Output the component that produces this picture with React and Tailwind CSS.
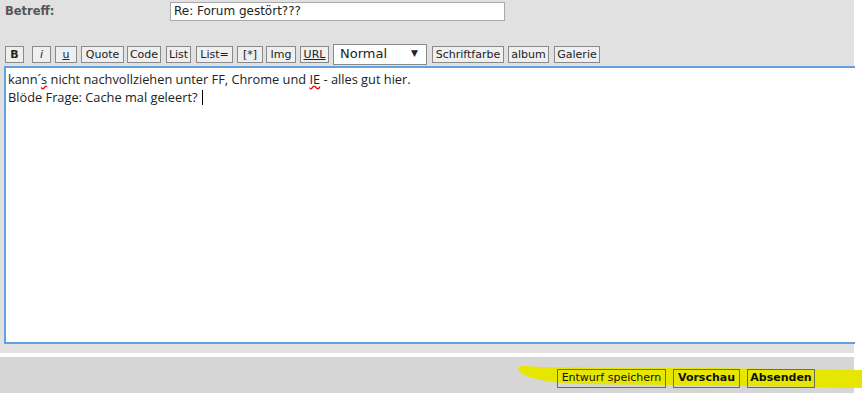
import React from "react";

const btn =
  "shrink-0 whitespace-nowrap h-[17px] border border-[#8a8a8a] bg-[#efefef] text-[11px] leading-[15px] text-[#222] flex items-center justify-center";

export default function App() {
  const tools = [
    { t: "B", w: "w-[19px]", c: "font-bold" },
    { t: "i", w: "w-[19px]", c: "italic ml-[8px]" },
    { t: "u", w: "w-[22px]", c: "underline ml-[4px]" },
    { t: "Quote", w: "w-[43px]", c: "ml-[4px]" },
    { t: "Code", w: "w-[34px]", c: "ml-[3px]" },
    { t: "List", w: "w-[25px]", c: "ml-[5px]" },
    { t: "List=", w: "w-[37px]", c: "ml-[5px]" },
    { t: "[*]", w: "w-[26px]", c: "ml-[4px]" },
    { t: "Img", w: "w-[30px]", c: "ml-[3px]" },
    { t: "URL", w: "w-[29px]", c: "ml-[4px] underline" },
  ];
  const bb =
    "shrink-0 whitespace-nowrap h-[19px] border border-[#6a6a6a] flex items-center justify-center";
  return (
    <div
      className="w-[862px] h-[393px] bg-white flex flex-col overflow-hidden relative"
      style={{ fontFamily: '"DejaVu Sans", Verdana, sans-serif' }}
    >
      <div className="w-[854px] h-[353px] bg-[#e1e1e1] flex flex-col">
        <div className="flex h-[43px]">
          <div className="w-[170px] pl-[5px] pt-[3px] text-[11.5px] font-bold text-[#555]">
            Betreff:
          </div>
          <div className="mt-[2px] w-[335px] h-[19px] bg-white border border-[#a9a9a9] text-[12px] leading-[17px] pl-[3px] text-[#222]">
            Re: Forum gestört???
          </div>
        </div>
        <div className="flex items-center h-[22px] pl-[5px]">
          {tools.map((b) => (
            <div key={b.t} className={`${btn} ${b.w} ${b.c}`}>
              {b.t}
            </div>
          ))}
          <div className="shrink-0 ml-[4px] w-[94px] h-[21px] bg-white border border-[#8a8a8a] flex items-center justify-between pl-[6px] pr-[8px] text-[13px] text-[#222]">
            <span>Normal</span>
            <span className="text-[9px]">▼</span>
          </div>
          <div className={`${btn} w-[72px] ml-[5px]`}>Schriftfarbe</div>
          <div className={`${btn} w-[41px] ml-[4px]`}>album</div>
          <div className={`${btn} w-[46px] ml-[5px]`}>Galerie</div>
        </div>
        <div
          className="ml-[4px] mt-[1px] w-[851px] h-[278px] bg-white border-2 border-[#64a0e0] border-r-0 pl-[2px] pt-[2px] text-[12.8px] leading-[18px] text-[#222]"
          style={{ fontFamily: '"Open Sans", sans-serif' }}
        >
          <div className="whitespace-nowrap">
            kann´<span className="underline decoration-wavy decoration-red-600">s</span> nicht nachvollziehen unter FF, Chrome und{" "}
            <span className="underline decoration-wavy decoration-red-600">IE</span> - alles gut hier.
          </div>
          <div className="flex items-center">
            Blöde Frage: Cache mal geleert?
            <span className="inline-block ml-[4px] w-px h-[15px] bg-black" />
          </div>
        </div>
      </div>
      <div className="h-[4px]" />
      <div className="relative w-[854px] h-[36px] bg-[#d6d6d6]">
        <svg
          className="absolute left-[516px] top-[5px]"
          width="346"
          height="28"
          viewBox="0 0 346 28"
        >
          <path
            d="M6 4 C 40 6, 120 6, 200 6 L 346 8 L 346 26 C 260 24, 150 23, 60 22 C 30 20, 10 16, 4 10 C 1 7, 2 4, 6 4 Z"
            fill="#e6e600"
          />
        </svg>
        <div className="absolute left-[557px] top-[12px] flex gap-[7px] text-[11px] text-[#111]">
          <div className={`${bb} w-[109px]`}>Entwurf speichern</div>
          <div className={`${bb} w-[67px] font-bold`}>Vorschau</div>
          <div className={`${bb} w-[68px] font-bold`}>Absenden</div>
        </div>
      </div>
    </div>
  );
}
